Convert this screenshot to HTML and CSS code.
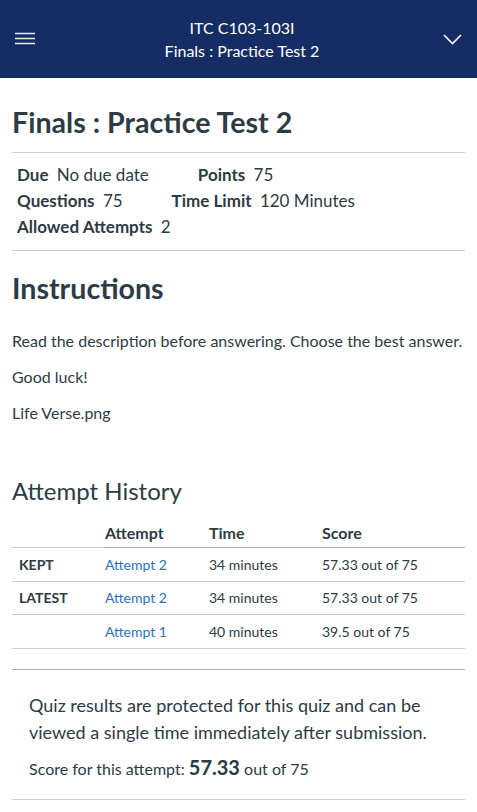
FILE: index.html
```html
<!DOCTYPE html>
<html>
<head>
<meta charset="utf-8">
<link rel="stylesheet" href="styles.css">
</head>
<body>
<header class="topbar">
  <button class="icon-btn" aria-label="Menu">
    <svg width="20" height="14" viewBox="0 0 20 14"><path d="M0 1.5H20M0 6.5H20M0 11.5H20" stroke="#fff" stroke-width="1.5" opacity="0.9"/></svg>
  </button>
  <div class="topbar-title">
    <div>ITC C103-103I</div>
    <div>Finals : Practice Test 2</div>
  </div>
  <button class="icon-btn" aria-label="Expand">
    <svg width="19" height="11" viewBox="0 0 19 11"><path d="M1 1L9.5 9.5L18 1" fill="none" stroke="#fff" stroke-width="1.6"/></svg>
  </button>
</header>
<main class="content">
  <h1 class="page-title">Finals : Practice Test 2</h1>
  <div class="details">
    <div class="detail-row">
      <span class="item"><b>Due</b> No due date</span>
      <span class="item"><b>Points</b> 75</span>
    </div>
    <div class="detail-row">
      <span class="item"><b>Questions</b> 75</span>
      <span class="item"><b>Time Limit</b> 120 Minutes</span>
    </div>
    <div class="detail-row">
      <span class="item"><b>Allowed Attempts</b> 2</span>
    </div>
  </div>
  <h2 class="section-title">Instructions</h2>
  <div class="desc">
    <p>Read the description before answering. Choose the best answer.</p>
    <p>Good luck!</p>
    <p>Life Verse.png</p>
  </div>
  <h3 class="history-title">Attempt History</h3>
  <table class="history">
    <thead>
      <tr><th class="blank"></th><th>Attempt</th><th>Time</th><th>Score</th></tr>
    </thead>
    <tbody>
      <tr><td class="lbl">KEPT</td><td><a href="#">Attempt 2</a></td><td>34 minutes</td><td>57.33 out of 75</td></tr>
      <tr><td class="lbl">LATEST</td><td><a href="#">Attempt 2</a></td><td>34 minutes</td><td>57.33 out of 75</td></tr>
      <tr><td class="lbl"></td><td><a href="#">Attempt 1</a></td><td>40 minutes</td><td>39.5 out of 75</td></tr>
    </tbody>
  </table>
  <div class="results">
    <p class="protected">Quiz results are protected for this quiz and can be viewed a single time immediately after submission.</p>
    <p class="score">Score for this attempt: <b>57.33</b> out of 75</p>
  </div>
</main>
</body>
</html>
```
FILE: styles.css
```css
* { box-sizing: border-box; }
html, body { margin: 0; padding: 0; background: #fff; }
body { font-family: Lato, "Open Sans", sans-serif; color: #2d3b45; }

.topbar {
  height: 78px;
  background: #152d64;
  color: #fff;
  display: flex;
  align-items: center;
  justify-content: space-between;
  padding: 0 14px 0 15px;
}
.icon-btn {
  background: none;
  border: 0;
  padding: 0;
  display: flex;
  align-items: center;
  width: 20px;
}
.topbar-title {
  flex: 1;
  text-align: center;
  font-size: 16px;
  line-height: 23px;
  padding-left: 6px;
}

.content { padding: 0 12px; }
.page-title {
  font-size: 28.6px;
  font-weight: 700;
  margin: 0;
  padding: 27px 0 13px;
  line-height: 34px;
  border-bottom: 1px solid #c7cdd1;
}
.details {
  padding: 9px 5px 10px;
  border-bottom: 1px solid #c7cdd1;
  font-size: 17px;
  line-height: 26px;
}
.detail-row { display: flex; gap: 49px; }
.item b { font-weight: 700; margin-right: 4px; }

.section-title {
  font-size: 28.6px;
  font-weight: 700;
  margin: 0;
  padding: 19px 0 0;
  line-height: 36px;
}
.desc { font-size: 16px; line-height: 24px; }
.desc p { margin: 12px 0; }
.desc p:first-child { margin-top: 23px; }

.history-title {
  font-size: 24px;
  font-weight: 400;
  margin: 51px 0 0;
  line-height: 30px;
}
.history {
  width: 100%;
  border-collapse: collapse;
  margin-top: 17px;
}
.history th {
  text-align: left;
  font-size: 16px;
  font-weight: 700;
  padding: 0 0 4px;
  line-height: 20px;
  border-bottom: 1px solid #a5adb3;
}
.history th.blank { border-bottom-color: #c7cdd1; width: 93px; }
.history th:nth-child(2) { width: 104px; }
.history th:nth-child(3) { width: 113px; }
.history td {
  font-size: 14px;
  height: 33.5px;
  padding: 0;
  border-bottom: 1px solid #c7cdd1;
  vertical-align: middle;
}
.history td.lbl { font-weight: 700; padding-left: 7px; }
.history a { color: #2b71c9; text-decoration: none; }

.results {
  margin-top: 20px;
  border-top: 1px solid #a5adb3;
  border-bottom: 1px solid #c7cdd1;
  padding: 22px 17px 18px;
}
.protected { font-size: 18px; line-height: 27px; margin: 0; }
.score { font-size: 16px; margin: 9px 0 0; line-height: 24px; }
.score b { font-size: 20px; }
```
